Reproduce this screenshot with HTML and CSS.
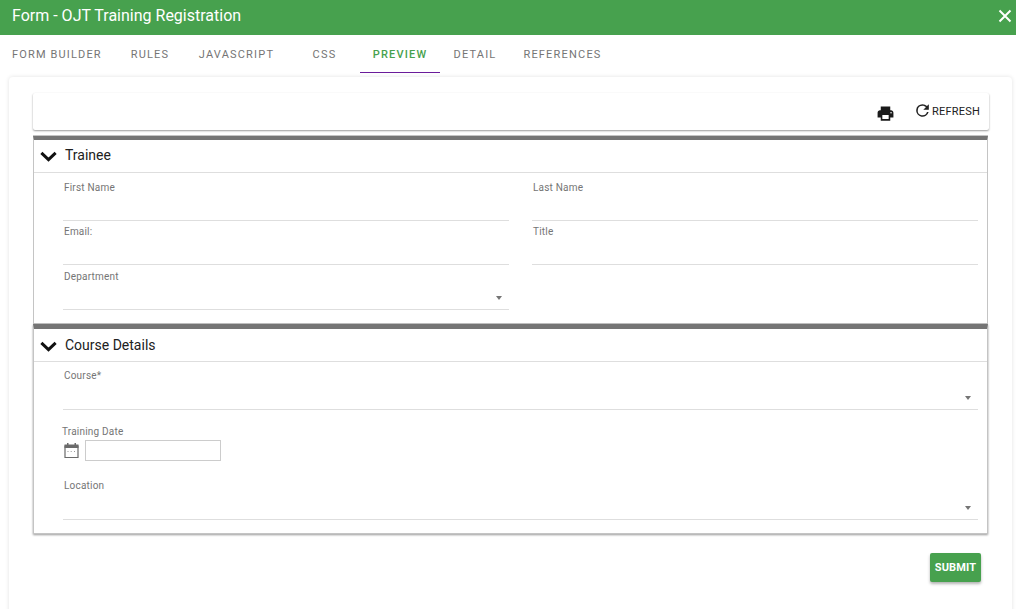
FILE: index.html
```html
<!DOCTYPE html>
<html lang="en">
<head>
<meta charset="utf-8">
<title>Form - OJT Training Registration</title>
<link rel="stylesheet" href="styles.css">
</head>
<body>
<header class="titlebar">
  <h1 class="title">Form - OJT Training Registration</h1>
  <svg class="close" viewBox="0 0 14 14" aria-hidden="true"><path d="M1.500 1.500l11 11M12.500 1.500l-11 11"/></svg>
</header>
<nav class="tabs">
  <a class="tab tab-first">FORM BUILDER</a>
  <a class="tab tab-rules">RULES</a>
  <a class="tab tab-js">JAVASCRIPT</a>
  <a class="tab tab-css">CSS</a>
  <a class="tab tab-active">PREVIEW</a>
  <a class="tab tab-detail">DETAIL</a>
  <a class="tab tab-refs">REFERENCES</a>
</nav>
<main class="card">
  <div class="toolbar">
    <svg class="print" viewBox="0 0 24 24" aria-hidden="true"><path d="M19 8H5c-1.660 0-3 1.340-3 3v6h4v4h12v-4h4v-6c0-1.660-1.340-3-3-3zm-3 11H8v-5h8v5zm3-7c-.55 0-1-.45-1-1s.45-1 1-1 1 .45 1 1-.45 1-1 1zm-1-9H6v5h12V3z"/></svg>
    <span class="refresh">
      <svg class="refresh-icon" viewBox="0 0 24 24" aria-hidden="true"><path d="M17.650 6.350A7.950 7.950 0 0 0 12 4a8 8 0 1 0 7.730 10h-2.080A6 6 0 1 1 12 6c1.660 0 3.140.69 4.220 1.780L13 11h7V4l-2.350 2.350z"/></svg>
      REFRESH
    </span>
  </div>
  <section class="panel">
    <div class="panel-head">
      <svg class="chev" viewBox="0 0 16 10" aria-hidden="true"><path d="M1.300 1.600L8 8l6.700-6.400"/></svg>
      <span>Trainee</span>
    </div>
    <div class="fields fields-two">
      <div class="field"><label class="label">First Name</label><div class="line"></div></div>
      <div class="field"><label class="label">Last Name</label><div class="line"></div></div>
      <div class="field"><label class="label">Email:</label><div class="line"></div></div>
      <div class="field"><label class="label">Title</label><div class="line"></div></div>
      <div class="field field-dept"><label class="label">Department</label><div class="line"><i class="caret"></i></div></div>
    </div>
  </section>
  <section class="panel panel-second">
    <div class="panel-head">
      <svg class="chev" viewBox="0 0 16 10" aria-hidden="true"><path d="M1.300 1.600L8 8l6.700-6.400"/></svg>
      <span>Course Details</span>
    </div>
    <div class="fields fields-one">
      <div class="field field-course"><label class="label">Course*</label><div class="line"><i class="caret"></i></div></div>
      <div class="date">
        <label class="date-label">Training Date</label>
        <div class="date-row">
          <svg class="cal" viewBox="0 0 15 15" aria-hidden="true">
            <path class="cal-frame" d="M1 3h13v11.500h-13z"/>
            <path class="cal-top" d="M.5 1.500h2.500V0h1.500v1.500h6V0H12v1.500h2.500v3.500H.5z"/>
            <path class="cal-dots" d="M3.500 8.500h1.500M6.700 8.500h1.500M10 8.500h1.500"/>
          </svg>
          <input class="date-input" type="text">
        </div>
      </div>
      <div class="field field-loc"><label class="label">Location</label><div class="line"><i class="caret"></i></div></div>
    </div>
  </section>
  <div class="actions"><button class="submit" type="button">SUBMIT</button></div>
</main>
</body>
</html>
```
FILE: styles.css
```css
* { box-sizing: border-box; }
html, body { height: 100%; }
body {
  margin: 0;
  background: #fff;
  font-family: Roboto, "Liberation Sans", sans-serif;
  color: #212121;
  overflow: hidden;
}
.titlebar {
  height: 35px;
  background: #47a14e;
  color: #fff;
  display: flex;
  align-items: center;
  justify-content: space-between;
  padding: 0 4px 4px 12px;
}
.title { margin: 0; font-size: 16px; font-weight: 400; line-height: 30px; }
.close { width: 14px; height: 14px; fill: none; stroke: #fff; stroke-width: 2; }
.tabs { display: flex; height: 38px; }
.tab {
  display: flex;
  align-items: center;
  justify-content: center;
  font-size: 11px;
  font-weight: 400;
  letter-spacing: 1.2px;
  color: #757575;
  padding-top: 1px;
}
.tab-first { width: 116px; padding-left: 12px; justify-content: flex-start; letter-spacing: 1.15px; }
.tab-rules { width: 68px; }
.tab-js { width: 105px; }
.tab-css { width: 71px; }
.tab-active { width: 80px; color: #47a14e; font-weight: 500; border-bottom: 1px solid #6a1b9a; }
.tab-detail { width: 70px; }
.tab-refs { width: 105px; }
.card {
  margin: 4px 4px 0 9px;
  height: 560px;
  padding: 16px 23px 0 24px;
  border-radius: 4px;
  box-shadow: 0 0 4px rgba(0,0,0,.12);
}
.toolbar {
  height: 37px;
  display: flex;
  align-items: center;
  justify-content: flex-end;
  padding-right: 9px;
  box-shadow: 0 1px 2px rgba(0,0,0,.4);
  border-radius: 2px;
}
.print { width: 19px; height: 19px; fill: #1a1a1a; margin-right: 18px; margin-top: 4px; }
.refresh { display: flex; align-items: center; font-size: 11px; color: #212121; letter-spacing: .2px; }
.refresh-icon { width: 19px; height: 19px; fill: #212121; margin-top: -2px; }
.panel {
  margin-top: 6px;
  margin-right: 1px;
  border: 1px solid #c4c4c4;
  border-top: 4px solid #757575;
  box-shadow: 0 -1px 0 #c4c4c4;
  height: 188px;
}
.panel-second {
  margin-top: 0;
  height: 210px;
  border-top-width: 5px;
  box-shadow: 0 1px 2px rgba(0,0,0,.4);
}
.panel-head {
  height: 30px;
  display: flex;
  align-items: center;
  border-bottom: 1px solid #dedede;
  font-size: 14px;
  color: #212121;
  padding-left: 6px;
  padding-bottom: 2px;
  box-sizing: content-box;
}
.panel-second .panel-head { padding-top: 1px; padding-bottom: 1px; }
.chev { width: 17px; height: 11px; fill: none; stroke: #111; stroke-width: 2.800; margin-right: 8px; margin-top: 2px; }
.fields { padding: 0 9px 0 30px; }
.fields-two { display: grid; grid-template-columns: 446px 446px; column-gap: 23px; padding-left: 29px; }
.fields-two .label { padding-left: 1px; }
.field { height: 44px; position: relative; padding-top: 10px; }
.label { display: block; font-size: 10px; line-height: 10px; color: #757575; letter-spacing: .2px; }
.line { position: relative; height: 29px; margin-top: -1px; border-bottom: 1px solid #dedede; }
.fields-one .line { margin-left: -1px; }
.field-dept { padding-top: 11px; }
.field-course { padding-top: 9px; }
.field-course .line { height: 30px; }
.caret {
  position: absolute;
  right: 7px;
  bottom: 9px;
  border-left: 3.500px solid transparent;
  border-right: 3.500px solid transparent;
  border-top: 4px solid #757575;
}
.date { height: 70px; padding-top: 21px; margin-left: -2px; }
.date-label { display: block; font-size: 10px; line-height: 10px; color: #757575; letter-spacing: .2px; }
.date-row { display: flex; align-items: center; margin-top: 3px; }
.cal { width: 15px; height: 15px; margin: 0 6px 0 2px; }
.cal-frame { fill: #fff; stroke: #6b6b6b; stroke-width: 1.200; }
.cal-top { fill: #6b6b6b; }
.cal-dots { stroke: #999; stroke-width: 1; fill: none; stroke-dasharray: 1 .5; }
.date-input { width: 136px; height: 21px; padding: 0; border: 1px solid #ccc; background: #fff; }
.field-loc { height: 48px; padding-top: 5px; }
.field-loc .line { margin-top: 0; }
.actions { display: flex; justify-content: flex-end; padding: 19px 8px 0 0; }
.submit {
  width: 51px;
  height: 29px;
  padding: 0;
  border: 0;
  border-radius: 2px;
  background: #47a14e;
  color: #fff;
  font-family: inherit;
  font-size: 11px;
  font-weight: 700;
  letter-spacing: .15px;
  box-shadow: 0 2px 3px rgba(0,0,0,.3);
}
```
